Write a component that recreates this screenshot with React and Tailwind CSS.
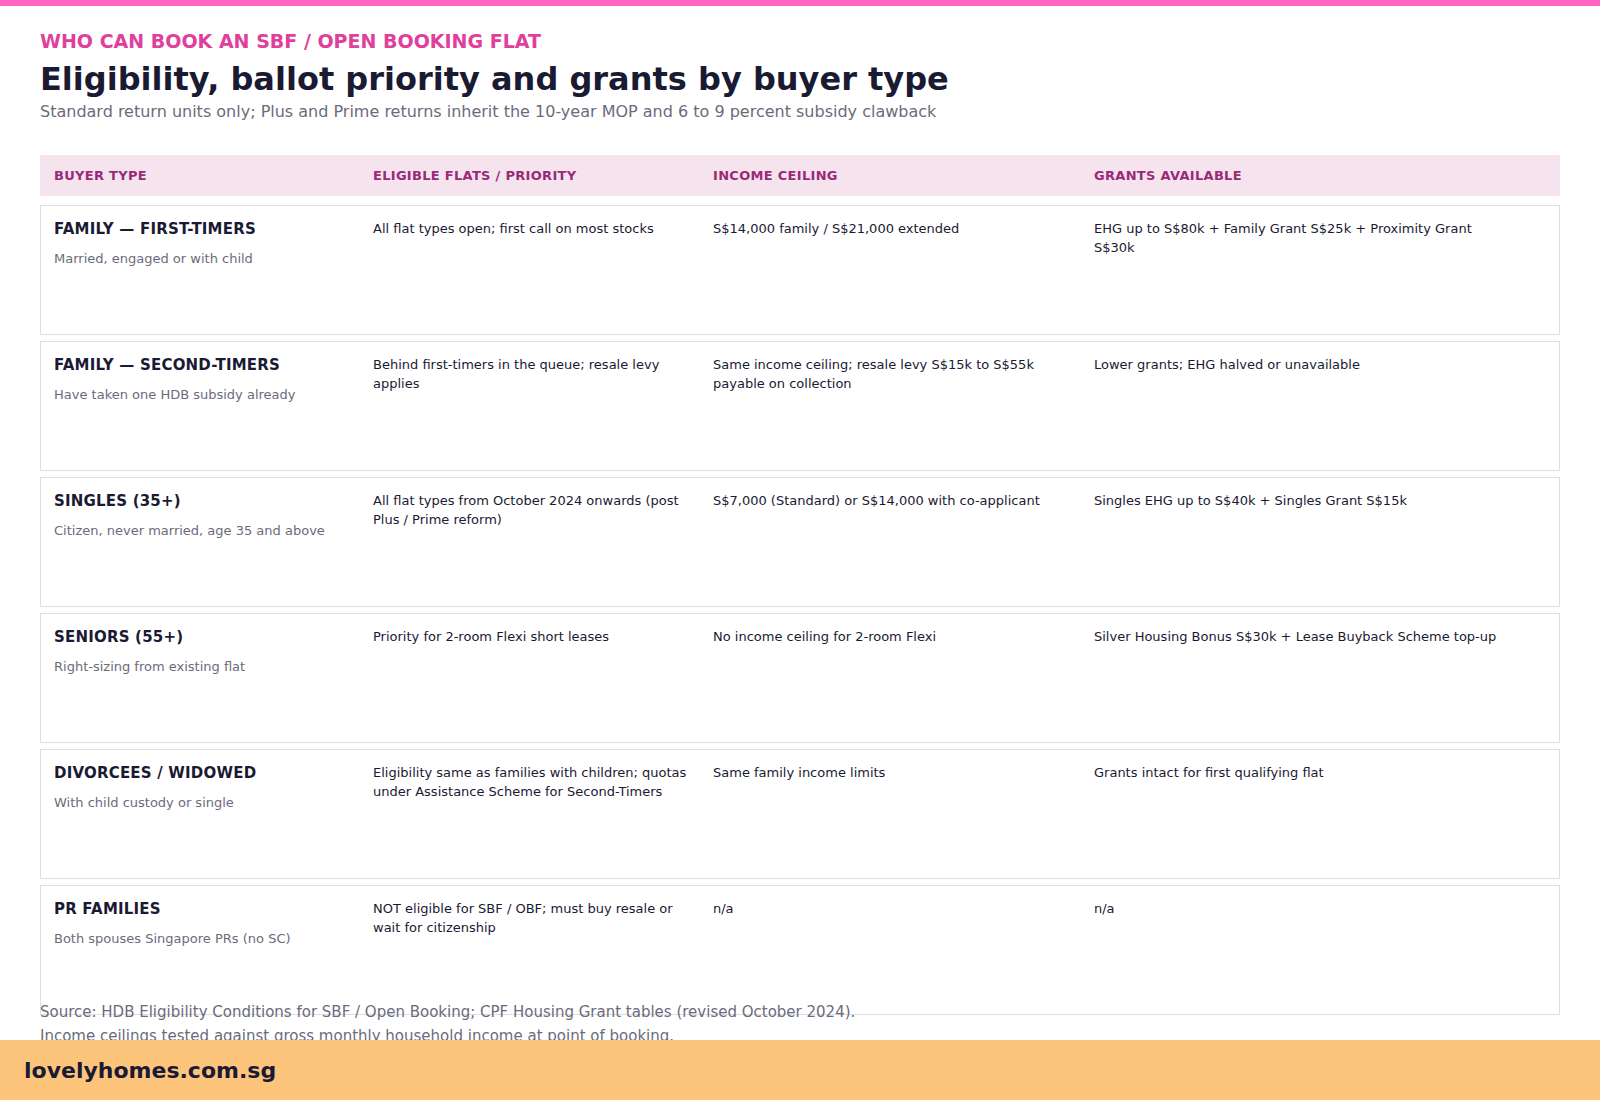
const rows = [
  ["FAMILY — FIRST-TIMERS","Married, engaged or with child","All flat types open; first call on most stocks","S$14,000 family / S$21,000 extended","EHG up to S$80k + Family Grant S$25k + Proximity Grant S$30k"],
  ["FAMILY — SECOND-TIMERS","Have taken one HDB subsidy already","Behind first-timers in the queue; resale levy applies","Same income ceiling; resale levy S$15k to S$55k payable on collection","Lower grants; EHG halved or unavailable"],
  ["SINGLES (35+)","Citizen, never married, age 35 and above","All flat types from October 2024 onwards (post Plus / Prime reform)","S$7,000 (Standard) or S$14,000 with co-applicant","Singles EHG up to S$40k + Singles Grant S$15k"],
  ["SENIORS (55+)","Right-sizing from existing flat","Priority for 2-room Flexi short leases","No income ceiling for 2-room Flexi","Silver Housing Bonus S$30k + Lease Buyback Scheme top-up"],
  ["DIVORCEES / WIDOWED","With child custody or single","Eligibility same as families with children; quotas under Assistance Scheme for Second-Timers","Same family income limits","Grants intact for first qualifying flat"],
  ["PR FAMILIES","Both spouses Singapore PRs (no SC)","NOT eligible for SBF / OBF; must buy resale or wait for citizenship","n/a","n/a"],
];
const cols = "grid grid-cols-[319px_340px_381px_1fr]";
export default function App(){
  return (
    <div className="w-[1600px] h-[1100px] bg-white overflow-hidden flex flex-col" style={{fontFamily:'"DejaVu Sans",sans-serif'}}>
      <div className="h-[6px] bg-[#ff66c4] shrink-0"/>
      <div className="h-[1034px] shrink-0 flex flex-col px-[40px]">
        <div className="text-[19px] font-bold text-[#e0409c] mt-[22px] leading-[26px]">WHO CAN BOOK AN SBF / OPEN BOOKING FLAT</div>
        <div className="text-[32px] font-bold text-[#1a1a33] leading-[44px] mt-[3px]">Eligibility, ballot priority and grants by buyer type</div>
        <div className="text-[16px] text-[#6b6b7b] leading-[22px]">Standard return units only; Plus and Prime returns inherit the 10-year MOP and 6 to 9 percent subsidy clawback</div>
        <div className="flex-1 min-h-0 mt-[32px]">
          <div className={`${cols} h-[41px] items-center bg-[#f5e4ee] text-[13px] font-bold text-[#9a2a78] tracking-[0.3px] px-[14px]`}>
            <div>BUYER TYPE</div><div>ELIGIBLE FLATS / PRIORITY</div><div>INCOME CEILING</div><div>GRANTS AVAILABLE</div>
          </div>
          <div className="flex flex-col gap-[6px] mt-[9px]">
            {rows.map((r,i)=>(
              <div key={i} className={`${cols} h-[130px] border border-[#dcdce2] px-[13px] pt-[13px] text-[13px] leading-[19px] text-[#1a1a33]`}>
                <div>
                  <div className="text-[15px] font-bold leading-[20px] tracking-[0.2px]">{r[0]}</div>
                  <div className="text-[#6b6b7b] mt-[10px]">{r[1]}</div>
                </div>
                <div className="pr-[14px]">{r[2]}</div>
                <div className="pr-[14px]">{r[3]}</div>
                <div className="pr-[40px]">{r[4]}</div>
              </div>
            ))}
          </div>
        </div>
        <div className="text-[15px] text-[#6b6b7b] leading-[24px] mb-[-8px]">
          <div>Source: HDB Eligibility Conditions for SBF / Open Booking; CPF Housing Grant tables (revised October 2024).</div>
          <div>Income ceilings tested against gross monthly household income at point of booking.</div>
        </div>
      </div>
      <div className="h-[60px] shrink-0 bg-[#fdc47c] flex items-center px-[24px] text-[22px] font-bold text-[#1a1a33] relative">lovelyhomes.com.sg</div>
    </div>
  );
}
